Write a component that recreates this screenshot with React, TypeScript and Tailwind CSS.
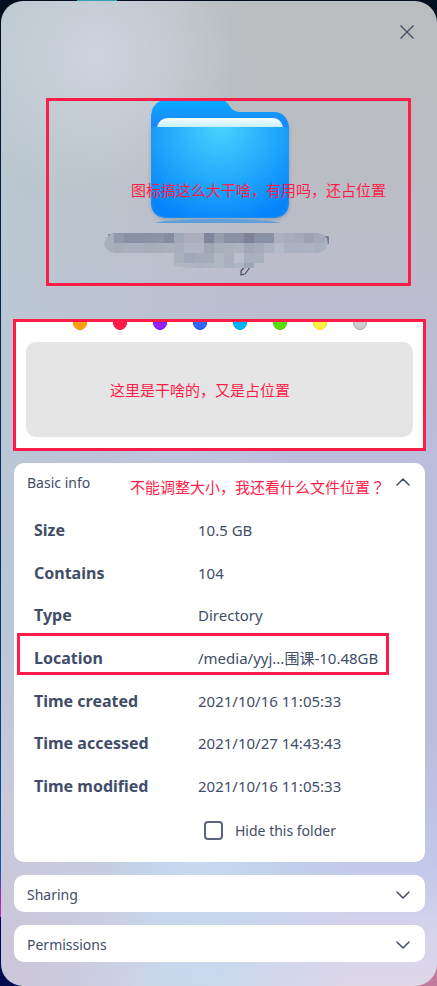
import { useState, type ReactNode } from 'react'
import clsx from 'clsx'

const DETAILS = [
  { label: 'Size', value: '10.5 GB' },
  { label: 'Contains', value: '104' },
  { label: 'Type', value: 'Directory' },
  { label: 'Location', value: '/media/yyj...围课-10.48GB', marked: true },
  { label: 'Time created', value: '2021/10/16 11:05:33' },
  { label: 'Time accessed', value: '2021/10/27 14:43:43' },
  { label: 'Time modified', value: '2021/10/16 11:05:33' },
]

const TAGS = [
  { name: 'Orange', color: 'bg-[#ff9f0a] border-[#f08c00]' },
  { name: 'Red', color: 'bg-[#ff1c49] border-[#e8133d]' },
  { name: 'Purple', color: 'bg-[#9023fc] border-[#7a12dd]' },
  { name: 'Navy blue', color: 'bg-[#3468ff] border-[#1b4ddc]' },
  { name: 'Azure', color: 'bg-[#00b5ff] border-[#009ce0]' },
  { name: 'Green', color: 'bg-[#58df0a] border-[#47bd04]' },
  { name: 'Yellow', color: 'bg-[#fef144] border-[#f0dc1c]' },
  { name: 'Gray', color: 'bg-[#cccccc] border-[#a8a8a8]' },
]

// Mosaic over the folder name, one colour per 10px cell
const MOSAIC = [
  {
    x: 104,
    y: 233,
    h: 10,
    cells: [
      '#a7afba', '#9099a9', '#8891a3', '#8891a3', '#8a92a4', '#8b94a5', '#848da0', '#a0a9b6', '#a8aebc', '#a8aebb', '#7f869b', '#959eae',
      '#8992a3', '#8991a3', '#7b8299', '#8991a4', '#8991a5', '#abb1bf', '#a6adbb', '#a3aab9', '#9ba2b2', '#a3a9b8', '#a8aebc',
    ],
  },
  {
    x: 104,
    y: 243,
    h: 10,
    cells: [
      '#a7afba', '#a5adba', '#a9b0bd', '#a9b0bd', '#a5adba', '#a7afbb', '#a9b1bd', '#a7afbb', '#afb5c2', '#afb5c2', '#9fa7b5', '#a7afbb',
      '#a9b1bd', '#adb4c0', '#a0a7b7', '#a4abba', '#abb2c0', '#b5bbc9', '#abb1c0', '#abb1c0', '#adb3c1', '#a8afbd', '#adb3c1',
    ],
  },
  { x: 174, y: 253, h: 10, cells: ['#a9b1bd', '#9fa8b6', '#a4acba', '#a4acba', '#b0b8c3', '#a8b0bd', '#b9c0cc', '#a9b0be', '#a9b0be'] },
  { x: 174, y: 263, h: 5, cells: ['#b0b7c3', '#afb6c2', '#abb3c0', '#aeb5c1', '#b0b8c4', '#aab2bf', '#b0b7c4', '#9da6b5'] },
]

function Chevron({ up = false }: { up?: boolean }) {
  return (
    <svg width="14" height="8" viewBox="0 0 14 8" fill="none" className={clsx(up && 'rotate-180')} aria-hidden="true">
      <path d="M1 1l6 6 6-6" stroke="#414d68" strokeWidth="1.5" strokeLinecap="round" strokeLinejoin="round" />
    </svg>
  )
}

function FolderArt() {
  return (
    <svg width="232" height="180" viewBox="103 100 232 180" className="mx-auto block overflow-visible" aria-hidden="true">
      <defs>
        <radialGradient id="front" gradientUnits="userSpaceOnUse" cx="220" cy="127" r="98">
          <stop offset="0" stopColor="#47d2ff" />
          <stop offset="0.5" stopColor="#25aefc" />
          <stop offset="1" stopColor="#0684fa" />
        </radialGradient>
        <linearGradient id="back" x1="0" y1="0" x2="0" y2="1">
          <stop offset="0" stopColor="#08abff" />
          <stop offset="1" stopColor="#1e82fb" />
        </linearGradient>
        <linearGradient id="paper" x1="0" y1="0" x2="0" y2="1">
          <stop offset="0" stopColor="#f6fdff" />
          <stop offset="1" stopColor="#c6f0fd" />
        </linearGradient>
        <filter id="soft" x="-10%" y="-10%" width="120%" height="120%">
          <feGaussianBlur stdDeviation="2" />
        </filter>
        <clipPath id="nameShape">
          <path d="M113 233h204l7 2 4 7-3 8-6 3h-54v10h-10v5H228q-28 3-54-2V253h-59q-8-1-11-8 1-9 9-12z" />
        </clipPath>
      </defs>
      <rect x="151" y="116" width="138" height="104" rx="16" fill="#47627f" opacity="0.35" filter="url(#soft)" />
      <path d="M151 128v-13q1-10 9-14h65q3 2 6 7 4 4 9 4h35q12 1 14 15z" fill="url(#back)" />
      <path d="M157 127q2-9 12-9h103q9 0 11 9z" fill="url(#paper)" />
      <path d="M151 127h138v75q0 16-17 16H168q-17 0-17-16z" fill="url(#front)" />
      <path d="M151.500 127v75q0 15.500 16.500 15.500h104q16.500 0 16.500-15.500v-75" fill="none" stroke="#2b94ea" opacity="0.6" />
      <path d="M154 223l10-2q56-4 106 0l11 2z" fill="#5c9fda" />
      <g stroke="#414d68" strokeWidth="1.200" fill="none">
        <path d="M108 235h3M323 237h5v7" />
        <path d="M251 266l-6 8-4 1 0-4 6-7z" strokeLinejoin="round" />
      </g>
      <g clipPath="url(#nameShape)" shapeRendering="crispEdges">
        {MOSAIC.map((row) =>
          row.cells.map((fill, i) => <rect key={`${row.y}-${i}`} x={row.x + i * 10} y={row.y} width="10" height={row.h} fill={fill} />),
        )}
      </g>
    </svg>
  )
}

function Note({ className, children }: { className?: string; children: ReactNode }) {
  return (
    <p
      className={clsx(
        "pointer-events-none absolute whitespace-nowrap font-['Noto_Sans_CJK_SC',sans-serif] text-[15px] leading-5 text-[#ff1c49]",
        className,
      )}
    >
      {children}
    </p>
  )
}

function CollapsedCard({ title }: { title: string }) {
  return (
    <button type="button" className="flex h-[37px] w-full items-center justify-between rounded-[10px] bg-white pt-[2px] pr-[15px] pl-[13px] text-left">
      <span>{title}</span>
      <Chevron />
    </button>
  )
}

export default function App() {
  const [open, setOpen] = useState(true)
  const [hidden, setHidden] = useState(false)

  return (
    <div className="relative min-h-screen overflow-hidden bg-[linear-gradient(180deg,#020f1f_0,#02284f_30%,#043a6c_70%,#0060ac_88%,#9c2aa8_91%,#b03aa8_93%,#020a58_93%,#020a50_100%)] pt-px pl-px font-['Noto_Sans','Noto_Sans_CJK_SC',sans-serif] text-[14px] text-[#414d68]">
      <div className="absolute top-0 left-[77px] h-px w-10 bg-[#35a3b0]" />
      <div className="absolute right-0 bottom-0 size-6 bg-[#c07a9c]" />

      <main className="relative min-h-[calc(100vh-1px)] rounded-[22px] bg-[radial-gradient(circle_at_95px_55px,#cdd4e0_0,#cad1dcb0_60px,#c4cad300_140px),radial-gradient(ellipse_at_0%_100%,#cbc5d8_0,#cdc9dcc0_12%,#cfcde000_26%),radial-gradient(ellipse_at_45%_88%,#c5d9ef_0,#c5d9ef00_45%),linear-gradient(90deg,#bbcdd6aa_0,#bcbdd600_60%),linear-gradient(180deg,#babdbf_0,#babdc0_10%,#bcbdcc_28%,#bbbdda_45%,#bcbddb_75%,#c2c9e8_88%,#d5d2ec_94%,#ddd7e8_100%)] pb-6">
        <header className="flex justify-end pt-4 pr-[15px]">
          <button type="button" aria-label="Close" className="flex size-[30px] items-center justify-center">
            <svg width="16" height="16" viewBox="0 0 16 16" fill="none" aria-hidden="true">
              <path d="M1.500 1.500l13 13M14.500 1.500l-13 13" stroke="#414d68" strokeWidth="1.200" />
            </svg>
          </button>
        </header>

        <section className="relative pt-[53px]">
          <FolderArt />
          <div className="pointer-events-none absolute top-[51px] right-[26px] left-[45px] h-[188px] border-3 border-[#ff1c49]" />
          <Note className="top-[133px] left-[130px]">图标搞这么大干啥，有用吗，还占位置</Note>
        </section>

        <section className="relative mt-[39px] mr-[11px] ml-3 border-3 border-[#ff1c49] bg-white px-[10px] pb-[11px]">
          <div className="flex h-2 items-end justify-center gap-[26px] overflow-hidden">
            {TAGS.map((tag) => (
              <button key={tag.name} type="button" aria-label={tag.name} className={clsx('size-[14px] shrink-0 rounded-full border', tag.color)} />
            ))}
          </div>
          <div className="mt-3 h-[95px] rounded-[10px] bg-[#e5e5e5]" />
          <Note className="top-[58px] left-[94px]">这里是干啥的，又是占位置</Note>
        </section>

        <div className="mt-3 mr-3 ml-[13px] flex flex-col gap-[13px]">
          <section className="relative rounded-[10px] bg-white pb-4">
            <button
              type="button"
              aria-expanded={open}
              onClick={() => setOpen(!open)}
              className="flex h-[38px] w-full items-center justify-between pr-[15px] pl-[13px] text-left"
            >
              <span>Basic info</span>
              <Chevron up={open} />
            </button>
            <Note className="top-[14px] left-[116px]">
              不能调整大小，我还看什么文件位置<span className="font-['Noto_Sans_CJK_JP',sans-serif]">？</span>
            </Note>

            {open && (
              <>
                <table className="mt-2 h-[298px] w-full table-fixed border-collapse text-left">
                  <tbody>
                    {DETAILS.map((row) => (
                      <tr key={row.label} className="relative">
                        <th scope="row" className="w-[184px] py-0 pr-0 pl-5 text-[16px] leading-5 font-bold">
                          {row.label}
                          {row.marked && <span className="pointer-events-none absolute -top-1 right-9 left-[3px] h-[42px] border-3 border-[#ff1c49]" />}
                        </th>
                        <td className="p-0 text-[15px] leading-5 whitespace-nowrap">{row.value}</td>
                      </tr>
                    ))}
                  </tbody>
                </table>
                <label className="mt-[7px] ml-[190px] flex h-8 w-fit items-center gap-3">
                  <input
                    type="checkbox"
                    checked={hidden}
                    onChange={(e) => setHidden(e.target.checked)}
                    className="size-[19px] appearance-none rounded-[4px] border-2 border-[#5a657c] bg-white checked:bg-[#414d68]"
                  />
                  <span>Hide this folder</span>
                </label>
              </>
            )}
          </section>

          <CollapsedCard title="Sharing" />
          <CollapsedCard title="Permissions" />
        </div>
      </main>
    </div>
  )
}
